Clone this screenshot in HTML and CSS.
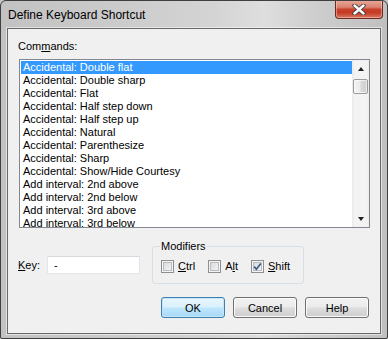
FILE: index.html
```html
<!DOCTYPE html>
<html>
<head>
<meta charset="utf-8">
<link rel="stylesheet" href="styles.css">
</head>
<body>
<div class="window">
  <div class="titlebar">
    <span class="title">Define Keyboard Shortcut</span>
    <div class="close">
      <svg width="14" height="11" viewBox="0 0 14 11">
        <path d="M2.5 1.5 L11.5 9.5 M11.5 1.5 L2.5 9.5" stroke="#3a3a3a" stroke-width="4.2" stroke-linecap="round" fill="none"/>
        <path d="M2.5 1.5 L11.5 9.5 M11.5 1.5 L2.5 9.5" stroke="#ffffff" stroke-width="2.4" stroke-linecap="round" fill="none"/>
      </svg>
    </div>
  </div>
  <div class="client">
    <div class="cmd-label">Com<u>m</u>ands:</div>
    <div class="listbox">
      <div class="items">
        <div class="item sel">Accidental: Double flat</div>
        <div class="item">Accidental: Double sharp</div>
        <div class="item">Accidental: Flat</div>
        <div class="item">Accidental: Half step down</div>
        <div class="item">Accidental: Half step up</div>
        <div class="item">Accidental: Natural</div>
        <div class="item">Accidental: Parenthesize</div>
        <div class="item">Accidental: Sharp</div>
        <div class="item">Accidental: Show/Hide Courtesy</div>
        <div class="item">Add interval: 2nd above</div>
        <div class="item">Add interval: 2nd below</div>
        <div class="item">Add interval: 3rd above</div>
        <div class="item">Add interval: 3rd below</div>
      </div>
      <div class="scrollbar">
        <div class="sb-btn"><span class="tri-up"></span></div>
        <div class="thumb"></div>
        <div class="track"></div>
        <div class="sb-btn"><span class="tri-down"></span></div>
      </div>
    </div>
    <div class="lower">
      <div class="key">
        <span class="key-label"><u>K</u>ey:</span>
        <div class="input">-</div>
      </div>
      <fieldset class="mods">
        <legend>Modifiers</legend>
        <div class="checks">
          <div class="check"><span class="box"></span><span><u>C</u>trl</span></div>
          <div class="check"><span class="box"></span><span>A<u>l</u>t</span></div>
          <div class="check"><span class="box"><svg width="11" height="11" viewBox="0 0 11 11"><path d="M2.2 5.6 L4.4 8.2 L8.8 2.4" stroke="#3f5a8c" stroke-width="1.7" fill="none"/></svg></span><span><u>S</u>hift</span></div>
        </div>
      </fieldset>
    </div>
    <div class="buttons">
      <button class="btn default">OK</button>
      <button class="btn">Cancel</button>
      <button class="btn">Help</button>
    </div>
  </div>
</div>
</body>
</html>
```
FILE: styles.css
```css
html, body {
  margin: 0;
  padding: 0;
  background: #c6c6c6;
}
body {
  font-family: "Liberation Sans", Arial, sans-serif;
  font-size: 11px;
  color: #000;
}
.window {
  width: 388px;
  height: 339px;
  box-sizing: border-box;
  border: 1px solid #3f3f3f;
  border-radius: 6px 6px 2px 2px;
  background: linear-gradient(90deg, #c2c2c2 0%, #cbcbcb 30%, #d4d4d4 55%, #dedede 68%, #cdcdcd 82%, #c0c0c0 100%);
  padding: 0 6px 4px 6px;
  display: flex;
  flex-direction: column;
  overflow: hidden;
}
.titlebar {
  height: 27px;
  flex: none;
  display: flex;
  justify-content: space-between;
  align-items: flex-start;
}
.title {
  font-size: 12px;
  line-height: 14px;
  margin-top: 7px;
  margin-left: 1px;
}
.close {
  width: 48px;
  height: 19px;
  box-sizing: border-box;
  margin-top: -1px;
  margin-right: -2px;
  border: 1px solid #6b2a22;
  border-top: none;
  border-radius: 0 0 4px 4px;
  background: linear-gradient(180deg, #e9aa9c 0%, #dc8270 40%, #c8412b 52%, #c53a24 70%, #d9785f 100%);
  box-shadow: inset 0 0 0 1px rgba(255, 220, 210, 0.45);
  display: flex;
  align-items: center;
  justify-content: center;
}
.client {
  height: 306px;
  flex: none;
  box-sizing: border-box;
  border: 1px solid #6a6a6a;
  background: #f0f0f0;
  padding: 11px 10px 0 10px;
  box-shadow: 0 0 0 1px rgba(255, 255, 255, 0.5);
}
.cmd-label {
  line-height: 13px;
  height: 13px;
}
u {
  text-underline-offset: 1px;
}
.listbox {
  margin: 6px 0 0 1px;
  width: 351px;
  height: 169px;
  box-sizing: border-box;
  border: 1px solid #828790;
  background: #fff;
  display: flex;
  padding: 0 0 0 1px;
  overflow: hidden;
}
.items {
  flex: 1;
  padding-top: 1px;
  overflow: hidden;
}
.item {
  height: 13px;
  line-height: 13px;
  padding-left: 2px;
  white-space: nowrap;
}
.item.sel {
  background: #3399ff;
  color: #fff;
}
.scrollbar {
  width: 17px;
  flex: none;
  display: flex;
  flex-direction: column;
  background: linear-gradient(90deg, #e9e9e9 0%, #f3f3f3 15%, #f3f3f3 85%, #ebebeb 100%);
}
.sb-btn {
  height: 17px;
  flex: none;
  display: flex;
  align-items: center;
  justify-content: center;
}
.tri-up {
  width: 0;
  height: 0;
  border-left: 3.5px solid transparent;
  border-right: 3.5px solid transparent;
  border-bottom: 4px solid #222;
}
.tri-down {
  width: 0;
  height: 0;
  border-left: 3.5px solid transparent;
  border-right: 3.5px solid transparent;
  border-top: 4px solid #222;
}
.thumb {
  height: 15px;
  flex: none;
  margin: 2px 1px 0 1px;
  box-sizing: border-box;
  border: 1px solid #9a9a9a;
  border-radius: 2px;
  background: linear-gradient(90deg, #f4f4f4 0%, #ebebeb 45%, #d9d9d9 55%, #cfcfcf 100%);
  box-shadow: inset 0 0 0 1px rgba(255, 255, 255, 0.6);
}
.track {
  flex: 1;
}
.lower {
  display: flex;
  align-items: flex-start;
  margin-top: 12px;
}
.key {
  display: flex;
  align-items: center;
  padding-top: 16px;
}
.key-label {
  width: 29px;
  line-height: 13px;
}
.input {
  width: 93px;
  height: 18px;
  box-sizing: border-box;
  border: 1px solid #e2e5ea;
  border-top-color: #d6d9de;
  background: #fff;
  padding-left: 6px;
  line-height: 16px;
}
.mods {
  margin: 0 0 0 12px;
  width: 152px;
  box-sizing: border-box;
  border: 1px solid #d5dfe5;
  border-radius: 3px;
  padding: 7px 8px 10px 8px;
  min-width: 0;
}
.mods legend {
  padding: 0 1px;
  margin-left: -1px;
  line-height: 13px;
}
.checks {
  display: flex;
  gap: 13px;
}
.check {
  display: flex;
  align-items: center;
  gap: 4px;
  line-height: 13px;
}
.box {
  width: 13px;
  height: 13px;
  box-sizing: border-box;
  border: 1px solid #8e8f8f;
  background: linear-gradient(135deg, #d2d4d8 0%, #e8e9eb 55%, #f6f6f6 100%);
  box-shadow: inset 0 0 0 1px #f4f4f4, inset 0 0 0 2px #b9bcc1;
  display: flex;
  align-items: center;
  justify-content: center;
}
.box svg {
  display: block;
}
.buttons {
  display: flex;
  justify-content: flex-end;
  gap: 8px;
  margin-top: 13px;
  margin-right: 1px;
}
.btn {
  width: 64px;
  height: 21px;
  box-sizing: border-box;
  border: 1px solid #707070;
  border-radius: 3px;
  background: linear-gradient(180deg, #f2f2f2 0%, #ebebeb 48%, #dddddd 52%, #cfcfcf 100%);
  box-shadow: inset 0 0 0 1px #fbfbfb;
  font-family: "Liberation Sans", Arial, sans-serif;
  font-size: 11px;
  color: #000;
  padding: 0;
  margin: 0;
}
.btn.default {
  border-color: #3c7fb1;
  background: linear-gradient(180deg, #eaf6fd 0%, #d9f0fc 48%, #bee6fd 52%, #a7d9f5 100%);
  box-shadow: inset 0 0 0 1px #c6e6f8, 0 0 0 0 transparent;
}
```
